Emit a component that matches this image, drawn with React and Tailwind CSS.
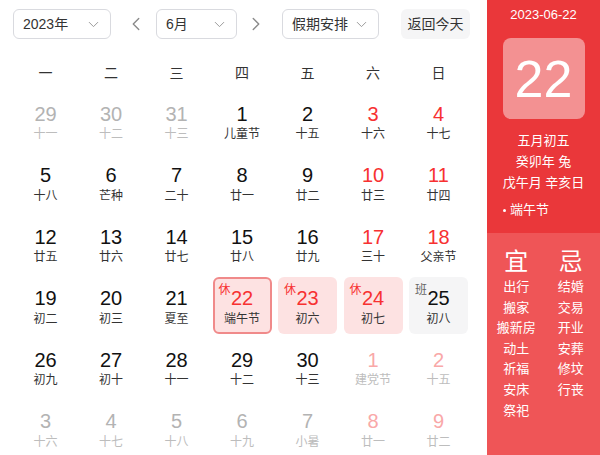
import React from 'react';
import { ChevronDown, ChevronLeft, ChevronRight } from 'lucide-react';

// kind: 'o' other month, 'w' weekend, 'ow' other month weekend, '' normal
const weeks = [
    [['29', '十一', 'o'], ['30', '十二', 'o'], ['31', '十三', 'o'], ['1', '儿童节', ''], ['2', '十五', ''], ['3', '十六', 'w'], ['4', '十七', 'w']],
    [['5', '十八', ''], ['6', '芒种', ''], ['7', '二十', ''], ['8', '廿一', ''], ['9', '廿二', ''], ['10', '廿三', 'w'], ['11', '廿四', 'w']],
    [['12', '廿五', ''], ['13', '廿六', ''], ['14', '廿七', ''], ['15', '廿八', ''], ['16', '廿九', ''], ['17', '三十', 'w'], ['18', '父亲节', 'w']],
    [['19', '初二', ''], ['20', '初三', ''], ['21', '夏至', ''], ['22', '端午节', 'sel'], ['23', '初六', 'rest'], ['24', '初七', 'rest'], ['25', '初八', 'work']],
    [['26', '初九', ''], ['27', '初十', ''], ['28', '十一', ''], ['29', '十二', ''], ['30', '十三', ''], ['1', '建党节', 'ow'], ['2', '十五', 'ow']],
    [['3', '十六', 'o'], ['4', '十七', 'o'], ['5', '十八', 'o'], ['6', '十九', 'o'], ['7', '小暑', 'o'], ['8', '廿一', 'ow'], ['9', '廿二', 'ow']],
];

const weekdays = ['一', '二', '三', '四', '五', '六', '日'];
const good = ['出行', '搬家', '搬新房', '动土', '祈福', '安床', '祭祀'];
const bad = ['结婚', '交易', '开业', '安葬', '修坟', '行丧'];

const Select = ({ label, width }) => (
    <div className={`${width} h-[30px] flex items-center justify-between pl-[9px] pr-[8px] border border-[#d9dadf] rounded-[6px] text-[14px] text-[#333]`}>
        <span>{label}</span>
        <ChevronDown size={17} strokeWidth={1.4} className="text-[#9a9a9a]" />
    </div>
);

const DayCell = ({ day }) => {
    const [num, lunar, kind] = day;
    const cellStyle = {
        sel: 'bg-[#fde2e2] border-2 border-[#f08a8a]',
        rest: 'bg-[#fde2e2]',
        work: 'bg-[#f5f5f6]',
    }[kind] || '';
    const numColor = {
        o: 'text-[#b3b3b3]',
        w: 'text-[#f73131]',
        ow: 'text-[#f9a8a8]',
        sel: 'text-[#f73131]',
        rest: 'text-[#f73131]',
        work: 'text-[#111]',
    }[kind] || 'text-[#111]';
    const lunarColor = kind === 'o' || kind === 'ow' ? 'text-[#bdbdbd]' : 'text-[#333]';
    const border = kind === 'sel';

    return (
        <div className={`relative h-[57px] rounded-[6px] flex flex-col items-center ${border ? 'pt-[9px]' : 'pt-[11px]'} ${cellStyle}`}>
            {(kind === 'sel' || kind === 'rest') && (
                <span className={`absolute ${border ? 'left-[4px] top-[5px]' : 'left-[6px] top-[7px]'} text-[12px] leading-none text-[#f73131]`}>休</span>
            )}
            {kind === 'work' && (
                <span className="absolute left-[6px] top-[7px] text-[12px] leading-none text-[#666]">班</span>
            )}
            <div className={`text-[20px] leading-[21px] ${numColor}`}>{num}</div>
            <div className={`mt-[2.5px] text-[12px] leading-[14px] ${lunarColor}`}>{lunar}</div>
        </div>
    );
};

export default function App() {
    return (
        <div className="w-[600px] h-[455px] flex overflow-hidden bg-white" style={{ fontFamily: '"Liberation Sans", "Noto Sans CJK SC", sans-serif' }}>

            {/* --- CALENDAR --- */}
            <div className="w-[487px] shrink-0 pt-[9px]">
                <div className="flex items-center pl-[13px]">
                    <Select label="2023年" width="w-[98px]" />
                    <ChevronLeft size={22} strokeWidth={1.5} className="ml-[14px] text-[#8a8a8a]" />
                    <div className="ml-[9px]"><Select label="6月" width="w-[81px]" /></div>
                    <ChevronRight size={22} strokeWidth={1.5} className="ml-[8px] text-[#8a8a8a]" />
                    <div className="ml-[15px]"><Select label="假期安排" width="w-[97px]" /></div>
                    <div className="ml-[22px] w-[69px] h-[30px] flex items-center justify-center rounded-[6px] bg-[#f5f5f6] text-[14px] text-[#333]">返回今天</div>
                </div>

                <div className="ml-[16px] mt-[24px] grid grid-cols-[repeat(7,59px)] gap-x-[6.5px] h-[20px] items-center text-[14px] text-[#333]">
                    {weekdays.map((w) => (
                        <div key={w} className="text-center">{w}</div>
                    ))}
                </div>

                <div className="ml-[16px] mt-[9.5px] grid grid-cols-[repeat(7,59px)] gap-x-[6.5px] gap-y-[4.5px]">
                    {weeks.flat().map((d, i) => (
                        <DayCell key={i} day={d} />
                    ))}
                </div>
            </div>

            {/* --- TODAY PANEL --- */}
            <div className="flex-1 flex flex-col text-white">
                <div className="h-[233px] bg-[#ea373a] flex flex-col items-center">
                    <div className="mt-[7px] text-[13px] leading-[16px]">2023-06-22</div>
                    <div className="mt-[15px] w-[82px] h-[81px] rounded-[8px] bg-white/45 flex items-center justify-center text-[52px] leading-none">22</div>
                    <div className="mt-[11px] text-[13px] leading-[21px] text-center">
                        <div>五月初五</div>
                        <div>癸卯年 兔</div>
                        <div>戊午月 辛亥日</div>
                    </div>
                    <div className="self-start mt-[9px] ml-[16px] text-[13px] leading-[16px] flex items-center gap-[4px]">
                        <span className="w-[3px] h-[3px] rounded-full bg-white"></span>
                        <span>端午节</span>
                    </div>
                </div>
                <div className="flex-1 bg-[#ef5557] grid grid-cols-2 px-[2px] pt-[15px] content-start">
                    {[['宜', good], ['忌', bad]].map(([title, items]) => (
                        <div key={title} className="flex flex-col items-center">
                            <div className="text-[24px] leading-[28px]">{title}</div>
                            <div className="mt-[1px] text-[13px] leading-[20.6px] text-center">
                                {items.map((t) => (
                                    <div key={t}>{t}</div>
                                ))}
                            </div>
                        </div>
                    ))}
                </div>
            </div>
        </div>
    );
}
